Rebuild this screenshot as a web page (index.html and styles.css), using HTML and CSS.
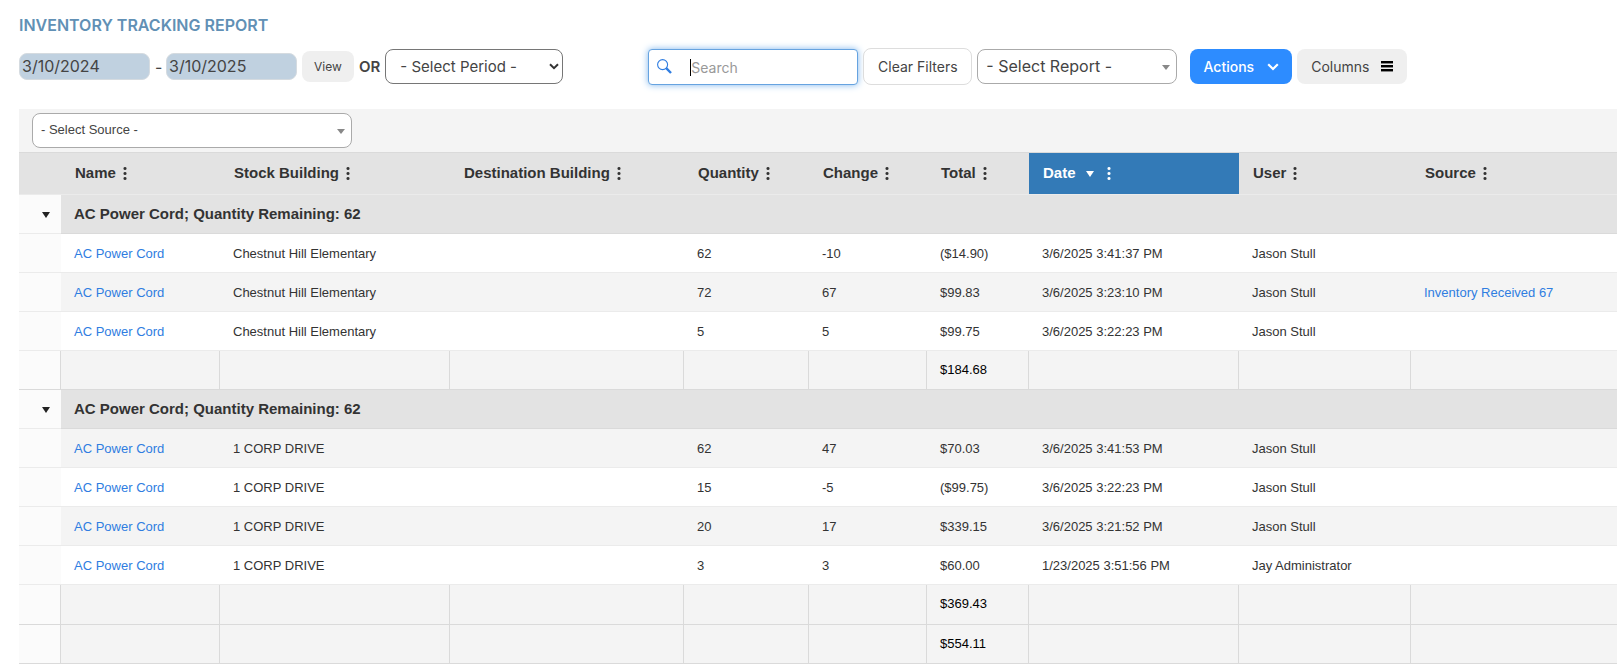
FILE: index.html
```html
<!DOCTYPE html>
<html lang="en">
<head>
    <meta charset="UTF-8">
    <meta name="viewport" content="width=device-width, initial-scale=1.0">
    <title>Inventory Tracking Report</title>
    <link rel="stylesheet" href="styles.css">
</head>
<body>

    <h1 class="title">INVENTORY TRACKING REPORT</h1>

    <div class="toolbar">
        <div class="period">
            <input type="text" class="date" aria-label="Start date" value="3/10/2024">
            <span class="dash">-</span>
            <input type="text" class="date" aria-label="End date" value="3/10/2025">
            <button class="btn view-btn">View</button>
            <label class="or" for="period">OR</label>
            <div class="select-box period-box">
                <select id="period" class="select">
                    <option>- Select Period -</option>
                </select>
                <svg class="chevron" viewBox="0 0 10 7" width="10" height="7"><path d="M1 1.3 5 5.2 9 1.3" fill="none" stroke="#333" stroke-width="2"/></svg>
            </div>
        </div>

        <div class="tools">
            <div class="search">
                <svg class="search-icon" viewBox="0 0 16 16" width="16" height="16">
                    <circle cx="5.6" cy="5.6" r="5" fill="none" stroke="#2f7de1" stroke-width="1.1"/>
                    <path d="M9.2 9.2 14 14" fill="none" stroke="#2f7de1" stroke-width="2.4"/>
                </svg>
                <input type="text" class="search-input" aria-label="Search" placeholder="Search">
            </div>
            <button class="btn clear-btn">Clear Filters</button>
            <div class="select-box report-box">
                <select class="select" aria-label="Report">
                    <option>- Select Report -</option>
                </select>
                <svg class="arrow" viewBox="0 0 8 5" width="8" height="5"><path d="M0 0h8L4 5z" fill="#888"/></svg>
            </div>
            <button class="btn actions-btn">Actions
                <svg viewBox="0 0 12 8" width="12" height="8"><path d="M1.2 1.2 6 6 10.8 1.2" fill="none" stroke="#fff" stroke-width="2.2"/></svg>
            </button>
            <button class="btn columns-btn">Columns
                <svg viewBox="0 0 12 11" width="12" height="11">
                    <path d="M0 1h12M0 5h12M0 9h12" stroke="#000" stroke-width="2"/>
                    <path d="M0 2.5h12M0 6.5h12M0 10.5h12" stroke="#888" stroke-width="1"/>
                </svg>
            </button>
        </div>
    </div>

    <div class="grid">
        <div class="grid-toolbar">
            <div class="select-box source-box">
                <select class="select" aria-label="Source">
                    <option>- Select Source -</option>
                </select>
                <svg class="arrow" viewBox="0 0 8 5" width="8" height="5"><path d="M0 0h8L4 5z" fill="#888"/></svg>
            </div>
        </div>

        <table class="report">
            <colgroup>
                <col class="c-toggle"><col class="c-name"><col class="c-stock"><col class="c-dest"><col class="c-qty">
                <col class="c-change"><col class="c-total"><col class="c-date"><col class="c-user"><col>
            </colgroup>
            <thead>
                <tr>
                    <th></th>
                    <th>Name<i class="dots"></i></th>
                    <th>Stock Building<i class="dots"></i></th>
                    <th>Destination Building<i class="dots"></i></th>
                    <th>Quantity<i class="dots"></i></th>
                    <th>Change<i class="dots"></i></th>
                    <th>Total<i class="dots"></i></th>
                    <th class="sorted">Date<i class="sort"></i><i class="dots"></i></th>
                    <th>User<i class="dots"></i></th>
                    <th>Source<i class="dots"></i></th>
                </tr>
            </thead>
            <tbody>
                <tr class="group">
                    <td class="toggle"><button class="toggle-btn" aria-label="Collapse group"></button></td>
                    <td colspan="9">AC Power Cord; Quantity Remaining: 62</td>
                </tr>
                <tr>
                    <td class="toggle"></td>
                    <td><a href="#">AC Power Cord</a></td>
                    <td>Chestnut Hill Elementary</td>
                    <td></td>
                    <td>62</td>
                    <td>-10</td>
                    <td>($14.90)</td>
                    <td>3/6/2025 3:41:37 PM</td>
                    <td>Jason Stull</td>
                    <td></td>
                </tr>
                <tr class="alt">
                    <td class="toggle"></td>
                    <td><a href="#">AC Power Cord</a></td>
                    <td>Chestnut Hill Elementary</td>
                    <td></td>
                    <td>72</td>
                    <td>67</td>
                    <td>$99.83</td>
                    <td>3/6/2025 3:23:10 PM</td>
                    <td>Jason Stull</td>
                    <td><a href="#">Inventory Received 67</a></td>
                </tr>
                <tr>
                    <td class="toggle"></td>
                    <td><a href="#">AC Power Cord</a></td>
                    <td>Chestnut Hill Elementary</td>
                    <td></td>
                    <td>5</td>
                    <td>5</td>
                    <td>$99.75</td>
                    <td>3/6/2025 3:22:23 PM</td>
                    <td>Jason Stull</td>
                    <td></td>
                </tr>
                <tr class="sum">
                    <td class="toggle"></td>
                    <td></td><td></td><td></td><td></td><td></td>
                    <td>$184.68</td>
                    <td></td><td></td><td></td>
                </tr>
            </tbody>
            <tbody>
                <tr class="group">
                    <td class="toggle"><button class="toggle-btn" aria-label="Collapse group"></button></td>
                    <td colspan="9">AC Power Cord; Quantity Remaining: 62</td>
                </tr>
                <tr class="alt">
                    <td class="toggle"></td>
                    <td><a href="#">AC Power Cord</a></td>
                    <td>1 CORP DRIVE</td>
                    <td></td>
                    <td>62</td>
                    <td>47</td>
                    <td>$70.03</td>
                    <td>3/6/2025 3:41:53 PM</td>
                    <td>Jason Stull</td>
                    <td></td>
                </tr>
                <tr>
                    <td class="toggle"></td>
                    <td><a href="#">AC Power Cord</a></td>
                    <td>1 CORP DRIVE</td>
                    <td></td>
                    <td>15</td>
                    <td>-5</td>
                    <td>($99.75)</td>
                    <td>3/6/2025 3:22:23 PM</td>
                    <td>Jason Stull</td>
                    <td></td>
                </tr>
                <tr class="alt">
                    <td class="toggle"></td>
                    <td><a href="#">AC Power Cord</a></td>
                    <td>1 CORP DRIVE</td>
                    <td></td>
                    <td>20</td>
                    <td>17</td>
                    <td>$339.15</td>
                    <td>3/6/2025 3:21:52 PM</td>
                    <td>Jason Stull</td>
                    <td></td>
                </tr>
                <tr>
                    <td class="toggle"></td>
                    <td><a href="#">AC Power Cord</a></td>
                    <td>1 CORP DRIVE</td>
                    <td></td>
                    <td>3</td>
                    <td>3</td>
                    <td>$60.00</td>
                    <td>1/23/2025 3:51:56 PM</td>
                    <td>Jay Administrator</td>
                    <td></td>
                </tr>
                <tr class="sum">
                    <td class="toggle"></td>
                    <td></td><td></td><td></td><td></td><td></td>
                    <td>$369.43</td>
                    <td></td><td></td><td></td>
                </tr>
            </tbody>
            <tfoot>
                <tr class="sum">
                    <td class="toggle"></td>
                    <td></td><td></td><td></td><td></td><td></td>
                    <td>$554.11</td>
                    <td></td><td></td><td></td>
                </tr>
            </tfoot>
        </table>
    </div>

</body>
</html>
```

FILE: styles.css
```css
* {
    margin: 0;
    padding: 0;
    box-sizing: border-box;
}

body {
    background-color: #fff;
    color: #444;
    font-family: Inter, sans-serif;
    font-size: 16px;
    padding: 15px 0 0 19px;
}

.title {
    font-size: 16px;
    font-weight: 600;
    line-height: 20px;
    color: #6190b5;
}

.toolbar {
    display: flex;
    align-items: center;
    gap: 85px;
    height: 37px;
    margin-top: 13px;
    margin-bottom: 24px;
}

.period,
.tools {
    display: flex;
    align-items: center;
    gap: 5px;
}

.date {
    width: 131px;
    height: 27px;
    padding: 0 2px 1px;
    border: 1px solid #d5dbe0;
    border-radius: 8px;
    background-color: #c0d1e0;
    color: #444;
    font-family: inherit;
    font-size: 16px;
}

.dash {
    width: 6px;
    text-align: center;
}

.btn {
    display: flex;
    align-items: center;
    justify-content: center;
    height: 35px;
    border: none;
    border-radius: 8px;
    background-color: #efefef;
    color: #444;
    font-family: inherit;
    font-size: 14px;
    cursor: pointer;
    white-space: nowrap;
}

.view-btn {
    width: 52px;
    height: 31px;
    font-size: 12px;
}

.or {
    font-size: 15px;
    font-weight: 600;
    line-height: 20px;
}

.select-box {
    position: relative;
    height: 35px;
}

.select {
    appearance: none;
    width: 100%;
    height: 100%;
    padding: 0 8px 2px;
    border: 1px solid #aaa;
    border-radius: 8px;
    background-color: #fff;
    color: #444;
    font-family: inherit;
    font-size: 16px;
}

.period-box {
    width: 178px;
}

.period-box .select {
    padding: 0 14px;
    border-color: #767676;
    font-size: 15px;
}

.chevron {
    position: absolute;
    right: 4px;
    top: 14px;
}

.arrow {
    position: absolute;
    right: 7px;
    top: 16px;
}

.search {
    display: flex;
    align-items: center;
    gap: 17px;
    width: 210px;
    height: 36px;
    padding: 0 8px;
    border: 1px solid #66a3e0;
    border-radius: 4px;
    background-color: #fff;
    box-shadow: 0 0 7px #7fb6ec;
}

.search-input {
    flex: 1;
    min-width: 0;
    height: 17px;
    margin-top: 2px;
    border: none;
    border-left: 1px solid #000;
    outline: none;
    background: none;
    color: #444;
    font-family: inherit;
    font-size: 14px;
}

.search-input::placeholder {
    color: #999;
}

.clear-btn {
    width: 109px;
    height: 37px;
    border: 1px solid #ddd;
    background-color: #fff;
}

.report-box {
    width: 200px;
}

.actions-btn {
    width: 102px;
    gap: 13px;
    margin-left: 8px;
    background-color: #2d8cff;
    color: #fff;
    font-weight: 500;
}

.columns-btn {
    width: 110px;
    gap: 12px;
}

/* grid */
.grid {
    font-family: "Liberation Sans", Arial, sans-serif;
}

.grid-toolbar {
    height: 43px;
    padding: 4px 13px;
    background-color: #f4f4f4;
}

.source-box {
    width: 320px;
}

.source-box .select {
    font-size: 13px;
}

.report {
    width: 100%;
    table-layout: fixed;
    border-collapse: separate;
    border-spacing: 0;
    border-top: 1px solid #dadada;
    color: #333;
    font-size: 13px;
}

.c-toggle { width: 42px; }
.c-name { width: 159px; }
.c-stock { width: 230px; }
.c-dest { width: 234px; }
.c-qty { width: 125px; }
.c-change { width: 118px; }
.c-total { width: 102px; }
.c-date { width: 210px; }
.c-user { width: 172px; }

.report th {
    height: 42px;
    padding: 0 0 3px 14px;
    border-bottom: 1px solid #ebebeb;
    background-color: #e3e3e3;
    font-size: 15px;
    text-align: left;
    white-space: nowrap;
}

.report th.sorted {
    background-color: #337ab7;
    color: #fff;
}

.dots {
    display: inline-block;
    width: 4px;
    height: 15px;
    margin-left: 7px;
    vertical-align: -3px;
    background: radial-gradient(circle, currentColor 1px, transparent 2px) 0 0 / 4px 5px;
}

.sort {
    display: inline-block;
    margin-left: 10px;
    margin-right: 6px;
    border: 4px solid transparent;
    border-top: 6px solid currentColor;
    border-bottom: none;
    vertical-align: 1px;
}

.report td {
    height: 39px;
    padding: 0 0 0 13px;
    border-bottom: 1px solid #ebebeb;
    white-space: nowrap;
}

.report td a {
    color: #2f7de1;
    text-decoration: none;
}

.alt td {
    background-color: #f4f4f4;
}

.report .group td {
    padding-bottom: 2px;
    border-bottom-color: #dadada;
    background-color: #e3e3e3;
    font-size: 15px;
    font-weight: bold;
}

.report .sum td {
    padding-bottom: 2px;
    border-right: 1px solid #dadada;
    border-bottom-color: #dadada;
    background-color: #f4f4f4;
    color: #000;
}

.report .sum td:last-child {
    border-right: none;
}

.report tbody:last-of-type .sum td {
    height: 40px;
}

.report td.toggle,
.report .group td.toggle,
.report .sum td.toggle {
    padding: 0 11px 2px 0;
    background-color: #fbfbfb;
    text-align: right;
}

.report .group td.toggle {
    border-bottom-color: #ebebeb;
}

.toggle-btn {
    width: 8px;
    height: 6px;
    border: 4px solid transparent;
    border-top: 6px solid #222;
    border-bottom: none;
    background: none;
    vertical-align: middle;
    cursor: pointer;
}
```
